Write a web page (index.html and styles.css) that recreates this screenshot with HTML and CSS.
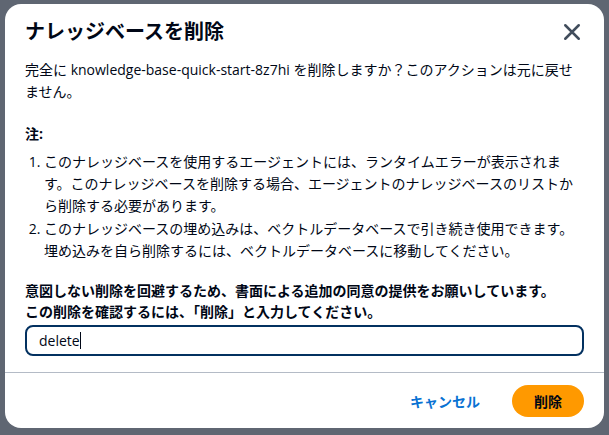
FILE: index.html
```html
<!DOCTYPE html>
<html>
<head>
<meta name="viewport" content="width=device-width, initial-scale=1">
<title>ナレッジベースを削除</title>
<link rel="stylesheet" href="styles.css">
</head>
<body>

<div class="overlay">
  <div class="modal">
    <div class="modal-header">
      <h2 class="modal-title">ナレッジベースを削除</h2>
      <button class="close-btn" aria-label="閉じる">
        <svg width="18" height="18" viewBox="0 0 16 16">
          <path d="M2 2 L14 14 M14 2 L2 14" stroke="#414d5c" stroke-width="2.2" fill="none" stroke-linecap="round"/>
        </svg>
      </button>
    </div>

    <div class="modal-body">
      <p class="intro">完全に knowledge-base-quick-start-8z7hi を削除しますか？このアクションは元に戻せません。</p>

      <p class="note-title">注:</p>
      <ol class="note-list">
        <li>このナレッジベースを使用するエージェントには、ランタイムエラーが表示されます。このナレッジベースを削除する場合、エージェントのナレッジベースのリストから削除する必要があります。</li>
        <li>このナレッジベースの埋め込みは、ベクトルデータベースで引き続き使用できます。埋め込みを自ら削除するには、ベクトルデータベースに移動してください。</li>
      </ol>

      <label class="confirm-label" for="confirm-input">意図しない削除を回避するため、書面による追加の同意の提供をお願いしています。<br>この削除を確認するには、「削除」と入力してください。</label>
      <div class="input-box" id="confirm-input"><span>delete</span><span class="caret"></span></div>
    </div>

    <div class="modal-footer">
      <button class="btn-link">キャンセル</button>
      <button class="btn-primary">削除</button>
    </div>
  </div>
</div>

</body>
</html>
```

FILE: styles.css
```css
* {box-sizing: border-box}
html, body {
  margin: 0;
  height: 100%;
}
body {
  font-family: "Open Sans", "Noto Sans CJK JP", sans-serif;
  color: #000716;
  background-color: #5f6672;
}
.overlay {
  height: 100%;
  padding: 4px 5px 7px 5px;
}
.modal {
  background-color: #fff;
  border-radius: 16px;
  height: 424px;
  display: flex;
  flex-direction: column;
}
.modal-header {
  display: flex;
  justify-content: space-between;
  align-items: center;
  padding: 14px 20px 0 20px;
}
.modal-title {
  margin: 0;
  font-size: 20px;
  line-height: 28px;
  font-weight: 700;
}
.close-btn {
  background: none;
  border: none;
  padding: 0;
  margin-right: 1px;
  width: 22px;
  height: 22px;
  display: flex;
  align-items: center;
  justify-content: center;
  cursor: pointer;
}
.modal-body {
  flex: 1;
  padding: 13px 20px 0 20px;
  font-size: 14px;
  line-height: 22px;
}
.intro {
  margin: 0 0 20px 0;
}
.note-title {
  margin: 0;
  font-weight: 700;
}
.note-list {
  margin: 6px 0 0 0;
  padding-left: 19px;
}
.note-list li {
  margin-bottom: 1px;
}
.confirm-label {
  display: block;
  margin-top: 18px;
  font-weight: 700;
  line-height: 21px;
}
.input-box {
  margin-top: 3px;
  height: 31px;
  border: 2px solid #033160;
  border-radius: 8px;
  padding: 0 12px;
  display: flex;
  align-items: center;
  font-size: 14px;
}
.caret {
  display: inline-block;
  width: 1px;
  height: 17px;
  background-color: #000716;
}
.modal-footer {
  border-top: 1px solid #b4bbc6;
  margin-top: 16px;
  padding: 12px 20px 11px 20px;
  display: flex;
  justify-content: flex-end;
  align-items: center;
  gap: 24px;
}
.btn-link {
  background: none;
  border: none;
  color: #0972d3;
  font-family: inherit;
  font-size: 14px;
  font-weight: 700;
  padding: 4px 8px;
  cursor: pointer;
}
.btn-primary {
  background-color: #ff9900;
  border: none;
  border-radius: 16px;
  color: #000716;
  font-family: inherit;
  font-size: 14px;
  font-weight: 700;
  width: 72px;
  height: 32px;
  cursor: pointer;
}
```
